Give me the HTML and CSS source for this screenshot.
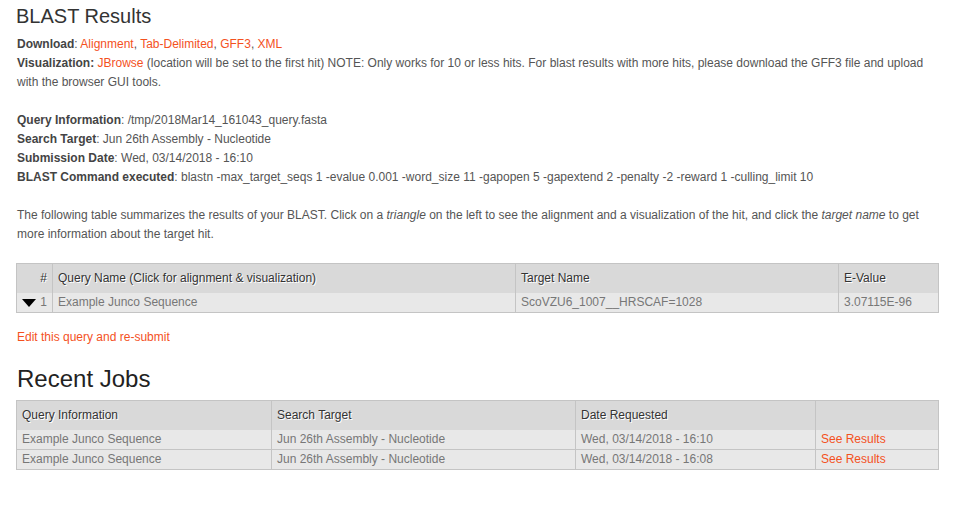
FILE: index.html
```html
<!DOCTYPE html>
<html>
<head>
<meta charset="utf-8">
<link rel="stylesheet" href="styles.css">
</head>
<body>
<div class="page">
  <h1 class="title">BLAST Results</h1>
  <p class="block">
    <b>Download</b>: <a href="#">Alignment</a>, <a href="#">Tab-Delimited</a>, <a href="#">GFF3</a>, <a href="#">XML</a><br>
    <b>Visualization:</b> <a href="#">JBrowse</a> (location will be set to the first hit) NOTE: Only works for 10 or less hits. For blast results with more hits, please download the GFF3 file and upload with the browser GUI tools.
  </p>
  <p class="block">
    <b>Query Information</b>: /tmp/2018Mar14_161043_query.fasta<br>
    <b>Search Target</b>: Jun 26th Assembly - Nucleotide<br>
    <b>Submission Date</b>: Wed, 03/14/2018 - 16:10<br>
    <b>BLAST Command executed</b>: blastn -max_target_seqs 1 -evalue 0.001 -word_size 11 -gapopen 5 -gapextend 2 -penalty -2 -reward 1 -culling_limit 10
  </p>
  <p class="block">
    The following table summarizes the results of your BLAST. Click on a <i>triangle</i> on the left to see the alignment and a visualization of the hit, and click the <i>target name</i> to get more information about the target hit.
  </p>
  <table class="grid results">
    <thead>
      <tr><th class="num">#</th><th class="qname">Query Name (Click for alignment &amp; visualization)</th><th class="tname">Target Name</th><th class="ev">E-Value</th></tr>
    </thead>
    <tbody>
      <tr><td class="num"><span class="tri"></span>1</td><td>Example Junco Sequence</td><td>ScoVZU6_1007__HRSCAF=1028</td><td>3.07115E-96</td></tr>
    </tbody>
  </table>
  <p class="edit"><a href="#">Edit this query and re-submit</a></p>
  <h2 class="subtitle">Recent Jobs</h2>
  <table class="grid jobs">
    <thead>
      <tr><th class="c1">Query Information</th><th class="c2">Search Target</th><th class="c3">Date Requested</th><th class="c4"></th></tr>
    </thead>
    <tbody>
      <tr><td>Example Junco Sequence</td><td>Jun 26th Assembly - Nucleotide</td><td>Wed, 03/14/2018 - 16:10</td><td><a href="#">See Results</a></td></tr>
      <tr><td>Example Junco Sequence</td><td>Jun 26th Assembly - Nucleotide</td><td>Wed, 03/14/2018 - 16:08</td><td><a href="#">See Results</a></td></tr>
    </tbody>
  </table>
</div>
</body>
</html>
```
FILE: styles.css
```css
html, body {
  margin: 0;
  padding: 0;
  background: #fff;
}
body {
  font-family: "Liberation Sans", Arial, sans-serif;
  font-size: 12px;
  color: #555;
}
.page {
  width: 923px;
  padding: 0 16px;
}
a {
  color: #f4511e;
  text-decoration: none;
}
b {
  color: #444;
}
.title {
  font-size: 20px;
  font-weight: normal;
  color: #333;
  margin: 0;
  padding-top: 4px;
  line-height: 24px;
}
.block {
  margin: 7px 0 19px 1px;
  line-height: 19px;
}
.block + .block {
  margin-top: 0;
}
.grid {
  width: 923px;
  border-collapse: collapse;
  border: 1px solid #c4c4c4;
  margin-top: 18px;
}
.grid th {
  background: #d9d9d9;
  color: #333;
  font-weight: normal;
  text-align: left;
  text-shadow: 1px 1px 0 #fff;
  height: 29px;
  padding: 0 5px;
  border-left: 1px solid #c4c4c4;
  line-height: 29px;
}
.grid td {
  background: #e8e8e8;
  color: #777;
  height: 19px;
  padding: 0 5px;
  border-left: 1px solid #c4c4c4;
  border-top: 1px solid #c4c4c4;
  line-height: 19px;
}
.grid thead + tbody tr:first-child td {
  border-top: none;
}
.results th.num, .results td.num {
  width: 25px;
  text-align: right;
}
.results .qname { width: 452px; }
.results .tname { width: 312px; }
.tri {
  float: left;
  width: 0;
  height: 0;
  border-left: 7px solid transparent;
  border-right: 7px solid transparent;
  border-top: 8px solid #000;
  margin: 6px 0 0 0;
}
.edit {
  margin: 15px 0 0 1px;
  line-height: 19px;
}
.subtitle {
  font-size: 24px;
  font-weight: normal;
  color: #222;
  margin: 17px 0 0 1px;
  line-height: 30px;
}
.jobs {
  margin-top: 6px;
}
.jobs .c1 { width: 244px; }
.jobs .c2 { width: 293px; }
.jobs .c3 { width: 229px; }
```
